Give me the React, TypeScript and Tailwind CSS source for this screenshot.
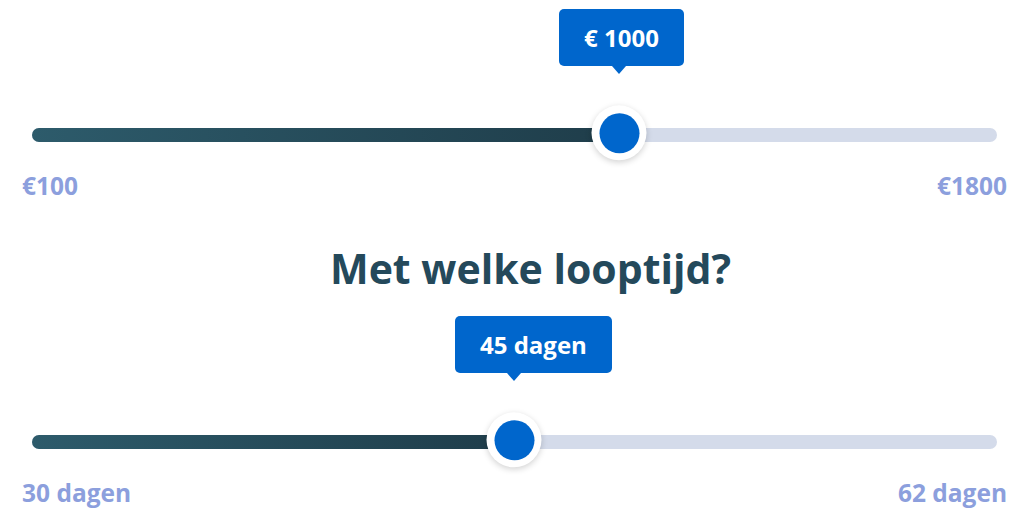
import React from 'react';

interface RangeSliderProps {
    value: string;
    min: string;
    max: string;
    thumbX: number; // px from track start
    tipX: number; // tooltip left, px from track start
}

const RangeSlider: React.FC<RangeSliderProps> = ({ value, min, max, thumbX, tipX }) => {
    return (
        <div>
            <div className="relative pt-[119px] px-[10px]">
                <div
                    className="absolute top-0 h-[57px] px-[25px] flex items-center rounded-[5px] bg-[#0066cc] text-white text-[24px] font-bold whitespace-nowrap"
                    style={{ left: tipX + 10 }}
                >
                    {value}
                </div>
                <div
                    className="absolute top-[57px] w-0 h-0 -translate-x-1/2 border-l-[7px] border-r-[7px] border-t-[8px] border-l-transparent border-r-transparent border-t-[#0066cc]"
                    style={{ left: thumbX + 10 }}
                />
                <div className="relative h-[14px] rounded-full bg-[#d4dbea]">
                    <div
                        className="h-full rounded-l-full bg-gradient-to-r from-[#2d5b6b] to-[#1f3d4a]"
                        style={{ width: thumbX }}
                    />
                    <div
                        className="absolute top-1/2 w-[55px] h-[55px] -translate-x-1/2 -translate-y-[54%] rounded-full bg-white shadow-[0_2px_6px_rgba(0,0,0,0.18)] flex items-center justify-center"
                        style={{ left: thumbX }}
                    >
                        <div className="w-[40px] h-[40px] rounded-full bg-[#0066cc]" />
                    </div>
                </div>
            </div>
            <div className="mt-[28px] flex justify-between text-[24.5px] leading-[32px] font-bold text-[#8c9fdd]">
                <span>{min}</span>
                <span>{max}</span>
            </div>
        </div>
    );
};

const App: React.FC = () => {
    return (
        <div
            className="w-[1024px] h-[519px] overflow-hidden bg-white pl-[22px] pr-[17px] pt-[9px] antialiased"
            style={{ fontFamily: '"Open Sans", "Noto Sans", sans-serif' }}
        >
            <RangeSlider value="€ 1000" min="€100" max="€1800" thumbX={587} tipX={527} />
            <h1 className="mt-[42px] pl-[32px] text-center text-[41px] leading-[48px] font-bold text-[#24495b]">
                Met welke looptijd?
            </h1>
            <div className="mt-[24px]">
                <RangeSlider value="45 dagen" min="30 dagen" max="62 dagen" thumbX={482} tipX={423} />
            </div>
        </div>
    );
};

export default App;
